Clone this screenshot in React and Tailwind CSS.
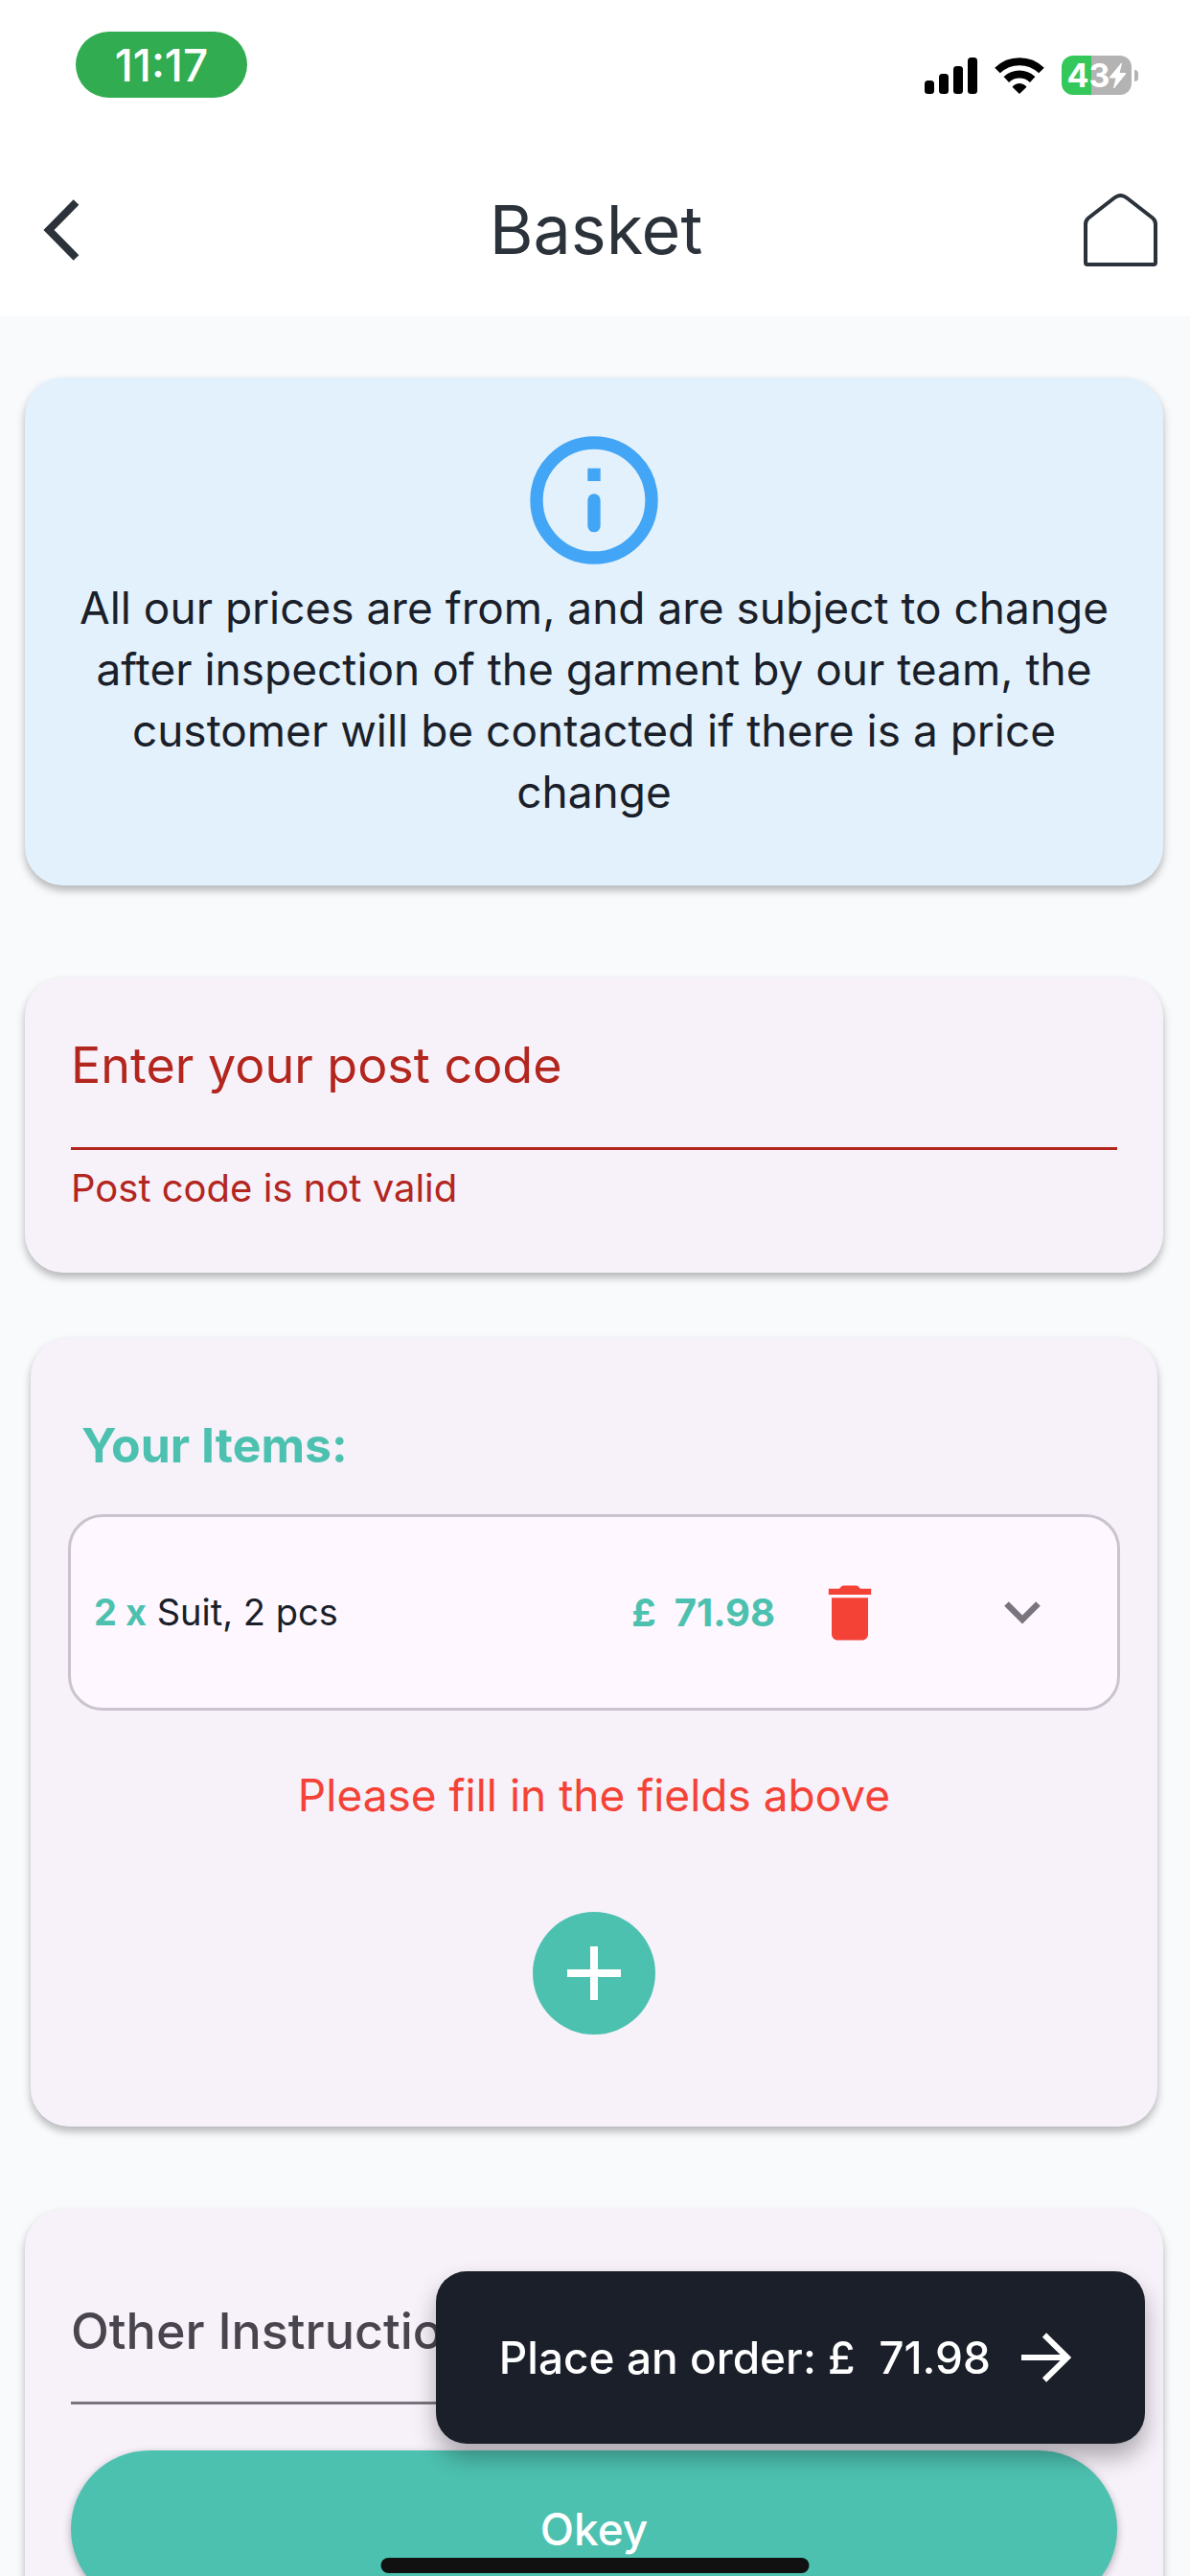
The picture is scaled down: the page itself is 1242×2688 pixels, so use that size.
import { useState } from 'react';

const items = [{ id: 1, quantity: 2, name: 'Suit, 2 pcs', price: 71.98 }];

const StatusBar = () => (
  <div className="flex items-start justify-between pl-[79px] pr-[54px] pt-[33px]">
    <div className="flex h-[69px] w-[179px] items-center justify-center rounded-full bg-[#31ac50] text-[46px] font-medium leading-none text-white">
      11:17
    </div>
    <div className="flex items-center gap-[18px] pt-[25px]">
      <svg width="55" height="38" viewBox="0 0 55 38" aria-hidden="true">
        <rect x="0" y="24" width="10" height="14" rx="3.5" />
        <rect x="15" y="17" width="10" height="21" rx="3.5" />
        <rect x="30" y="9" width="10" height="29" rx="3.5" />
        <rect x="45" y="0" width="10" height="38" rx="3.5" />
      </svg>
      <svg width="52" height="39" viewBox="0 0 52 39" aria-hidden="true">
        <path d="M3 14.5a33 33 0 0 1 46 0" fill="none" stroke="#000" strokeWidth="8" />
        <path d="M12.3 24a20 20 0 0 1 27.4 0" fill="none" stroke="#000" strokeWidth="8" />
        <path d="M26 39l-7.5-7.3c4-5 11-5 15 0z" />
      </svg>
      <div className="flex items-center gap-[3px]">
        <div className="flex h-[41px] w-[73px] items-center justify-center rounded-xl bg-linear-to-r from-[#34c759] from-[43%] to-[#b3b3b3] to-[43%] text-[34px] font-bold leading-none text-white">
          43
          <svg width="17" height="26" viewBox="0 0 17 26" aria-hidden="true">
            <path d="M12.500 0L0 15h7L4.500 26 17 10.500h-7z" fill="#fff" stroke="#fff" />
          </svg>
        </div>
        <div className="h-3 w-1 rounded-r-full bg-[#b3b3b3]" />
      </div>
    </div>
  </div>
);

const Header = () => (
  <header className="h-[330px] shrink-0 bg-white">
    <StatusBar />
    <div className="mt-[74px] flex items-center justify-between pl-[45px] pr-[34px] text-[#2b323a]">
      <button type="button" aria-label="Back" className="w-[68px]">
        <svg width="38" height="64" viewBox="0 0 38 64" fill="none">
          <path d="M34.5 3L6 32l28.500 29" stroke="currentColor" strokeWidth="8" />
        </svg>
      </button>
      <h1 className="text-[70px] leading-[128px]">Basket</h1>
      <a href="#home" aria-label="Home">
        <svg width="77" height="76" viewBox="0 0 77 76" fill="none">
          <path
            d="M2 72V32q0-4 3-6.500L32 4.500q6.500-5 13 0L72 25.500q3 2.500 3 6.500V72q0 2-2 2H4q-2 0-2-2z"
            stroke="currentColor"
            strokeWidth="4"
          />
        </svg>
      </a>
    </div>
  </header>
);

const Card = ({ className = '', children }) => (
  <section className={`rounded-[40px] shadow-[0_5px_9px_rgba(0,0,0,0.28)] ${className}`}>
    {children}
  </section>
);

const InfoIcon = () => (
  <svg className="size-40" viewBox="0 0 24 24" fill="#42a5f5" aria-hidden="true">
    <circle cx="12" cy="12" r="9" fill="none" stroke="#42a5f5" strokeWidth="2" />
    <rect x="11" y="7" width="2" height="2" />
    <rect x="11" y="11" width="2" height="6" rx="1" />
  </svg>
);

const TrashIcon = () => (
  <svg className="size-[76px]" viewBox="0 0 24 24" fill="#f44336" aria-hidden="true">
    <path d="M6 19c0 1.100.9 2 2 2h8c1.100 0 2-.9 2-2V7H6v12z" />
    <path d="M15.500 4l-.71-.71c-.18-.18-.44-.29-.7-.29H9.910c-.26 0-.52.11-.7.29L8.500 4H5v2h14V4z" />
  </svg>
);

const BasketItem = ({ item }) => (
  <div className="flex h-[205px] items-center rounded-[36px] border-3 border-[#cac4d0] bg-[#fef7ff] pl-6 pr-20">
    <p className="flex-1 text-[38px] text-[#1a1f29]">
      <span className="font-bold text-[#4dc1b0]">{item.quantity} x</span> {item.name}
    </p>
    <p className="whitespace-pre text-[40px] font-bold text-[#4dc1b0]">£  {item.price}</p>
    <button type="button" aria-label="Delete" className="ml-10">
      <TrashIcon />
    </button>
    <button type="button" aria-label="Details" className="ml-[123px]">
      <svg width="38" height="24" viewBox="0 0 38 24" fill="none">
        <path d="M2.500 2.500L19 19 35.500 2.500" stroke="#79747e" strokeWidth="6.500" />
      </svg>
    </button>
  </div>
);

const App = () => {
  const [postCode, setPostCode] = useState('');
  const [instructions, setInstructions] = useState('');

  const total = items.reduce((sum, item) => sum + item.price, 0);

  return (
    <div className="flex h-screen flex-col overflow-hidden bg-[#f8fafc] font-['Inter',sans-serif]">
      <Header />

      <main className="flex-1 overflow-y-auto pl-[26px] pr-7 pt-16 [scrollbar-width:none]">
        <Card className="flex flex-col items-center bg-[#e3f1fd] px-12 pb-[66px] pt-12">
          <InfoIcon />
          <p className="text-center text-[46px] leading-16 text-[#1a1f29]">
            All our prices are from, and are subject to change after inspection of the garment by our
            team, the customer will be contacted if there is a price change
          </p>
        </Card>

        <Card className="mt-24 flex flex-col bg-[#f7f1fa] px-12 pb-16 pt-[60px] text-[#b3261e]">
          <label htmlFor="postcode" className="text-[52px] leading-16">
            Enter your post code
          </label>
          <input
            id="postcode"
            value={postCode}
            onChange={(e) => setPostCode(e.target.value)}
            className="h-14 border-b-3 border-[#b3261e] text-[46px] outline-none"
          />
          <p className="mt-4 text-[40px] leading-12">Post code is not valid</p>
        </Card>

        <Card className="mx-[6px] mt-[68px] bg-[#f7f1fa] px-[39px] pb-24 pt-20">
          <h2 className="pl-[14px] text-[50px] font-bold leading-16 text-[#4dc1b0]">Your Items:</h2>
          <div className="mt-10">
            {items.map((item) => (
              <BasketItem key={item.id} item={item} />
            ))}
          </div>
          <p className="mt-14 text-center text-[46px] leading-16 text-[#f44336]">
            Please fill in the fields above
          </p>
          <button
            type="button"
            aria-label="Add item"
            className="mx-auto mt-[90px] flex size-32 items-center justify-center rounded-full bg-[#4dc1b0]"
          >
            <svg width="56" height="56" viewBox="0 0 56 56" aria-hidden="true">
              <path d="M28 0v56M0 28h56" stroke="#fff" strokeWidth="8" />
            </svg>
          </button>
        </Card>

        <Card className="mt-[86px] flex flex-col bg-[#f7f1fa] px-12 pb-16 pt-24">
          <label htmlFor="instructions" className="text-[52px] font-medium leading-16 text-[#49454f]">
            Other Instructions
          </label>
          <input
            id="instructions"
            value={instructions}
            onChange={(e) => setInstructions(e.target.value)}
            className="h-11 border-b-3 border-[#79747e] text-[46px] outline-none"
          />
          <button
            type="button"
            className="mt-12 h-[164px] rounded-full bg-[#4dc1b0] text-[46px] font-medium text-white shadow-[0_3px_8px_rgba(0,0,0,0.3)]"
          >
            Okey
          </button>
        </Card>
      </main>

      <button
        type="button"
        className="fixed bottom-[138px] right-[47px] flex h-[180px] items-center gap-8 rounded-[32px] bg-[#1a1f29] pl-[66px] pr-[77px] text-[46px] font-medium text-white shadow-[0_14px_24px_rgba(0,0,0,0.3)]"
      >
        <span className="whitespace-pre">Place an order: £  {total}</span>
        <svg width="52" height="52" viewBox="0 0 52 52" fill="none" aria-hidden="true">
          <path d="M0 26h47M24 2.500L48 26 24 49.500" stroke="currentColor" strokeWidth="6" />
        </svg>
      </button>

      <div className="fixed bottom-[3px] left-1/2 h-4 w-[447px] -translate-x-1/2 rounded-full bg-[#111]" />
    </div>
  );
};

export default App;
